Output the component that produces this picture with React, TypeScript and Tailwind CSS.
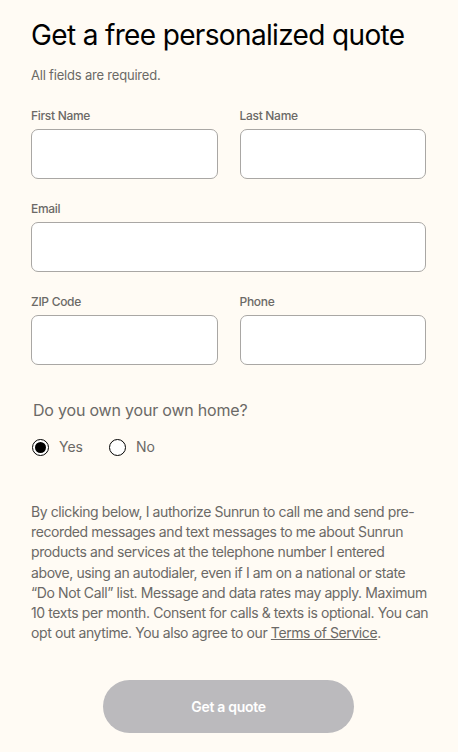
import React from "react";

function Field({ label, className = "" }: { label: string; className?: string }) {
  return (
    <div className={`flex flex-col ${className}`}>
      <label className="text-[12px] leading-[16px] font-medium text-[#6b6966] tracking-[-0.3px] mb-[5px]">{label}</label>
      <div className="h-[50px] rounded-[7px] border border-[#a9a7a4] bg-white" />
    </div>
  );
}

export default function App() {
  return (
    <div
      className="w-[458px] min-h-[752px] bg-[#fffbf4] pl-[31px] pr-[32px] pt-[18px]"
      style={{ fontFamily: "Inter, 'Noto Sans', sans-serif" }}
    >
      <h1 className="text-[28px] leading-[34px] font-normal text-black tracking-[-0.65px]">
        Get a free personalized quote
      </h1>
      <p className="mt-[14px] text-[13px] leading-[18px] text-[#6b6966] tracking-[-0.2px]">All fields are required.</p>

      <div className="mt-[24px] grid grid-cols-2 gap-x-[22px] gap-y-[22px]">
        <Field label="First Name" />
        <Field label="Last Name" />
        <Field label="Email" className="col-span-2" />
        <Field label="ZIP Code" />
        <Field label="Phone" />
      </div>

      <p className="mt-[34px] ml-[2px] text-[16px] leading-[22px] text-[#6b6966] tracking-[-0.2px]">Do you own your own home?</p>
      <div className="mt-[16px] h-[20px] flex items-center ml-[1px]">
        <div className="flex items-center gap-[10px]">
          <span className="w-[17px] h-[17px] rounded-full border-[1.5px] border-black flex items-center justify-center bg-white">
            <span className="w-[11px] h-[11px] rounded-full bg-black" />
          </span>
          <span className="text-[14px] leading-[20px] text-[#6b6966]">Yes</span>
        </div>
        <div className="ml-[26px] flex items-center gap-[10px]">
          <span className="w-[17px] h-[17px] rounded-full border-[1.5px] border-black bg-white" />
          <span className="text-[14px] leading-[20px] text-[#6b6966]">No</span>
        </div>
      </div>

      <p className="mt-[45px] text-[14px] leading-[20.2px] text-[#6b6966] tracking-[-0.4px] whitespace-nowrap">
        By clicking below, I authorize Sunrun to call me and send pre-
        <br />
        recorded messages and text messages to me about Sunrun
        <br />
        products and services at the telephone number I entered
        <br />
        above, using an autodialer, even if I am on a national or state
        <br />
        “Do Not Call” list. Message and data rates may apply. Maximum
        <br />
        10 texts per month. Consent for calls &amp; texts is optional. You can
        <br />
        opt out anytime. You also agree to our <span className="underline">Terms of Service</span>.
      </p>

      <div className="mt-[37px] flex justify-center">
        <button className="w-[251px] h-[53px] rounded-full bg-[#bbbabd] text-white text-[14px] font-semibold tracking-[-0.3px]">
          Get a quote
        </button>
      </div>
    </div>
  );
}
